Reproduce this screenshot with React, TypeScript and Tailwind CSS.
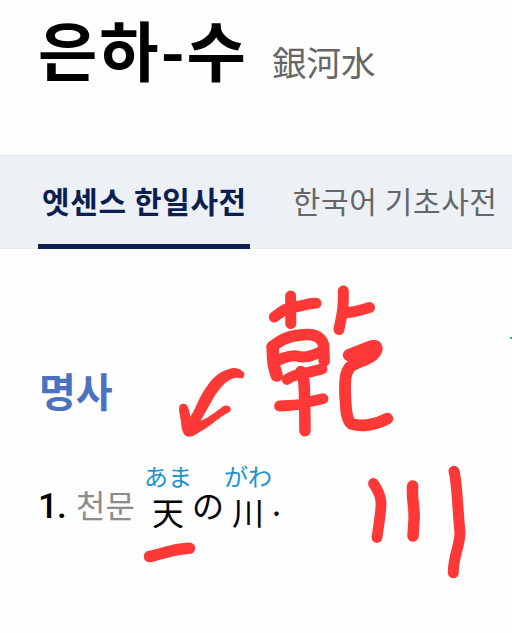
type Word = { text: string; reading?: string };

const TABS = [
    { name: "엣센스 한일사전", active: true },
    { name: "한국어 기초사전", active: false },
];

const WORDS: Word[] = [
    { text: "天", reading: "あま" },
    { text: "の" },
    { text: "川", reading: "がわ" },
];

// pen strokes, grouped by what was written
const STROKES: { d: string; width: number }[] = [
    // 乾
    { d: "M274.3 317 C280 313 284 309 290 308 C300 307 307 303 316 303.3", width: 11 },
    { d: "M290.6 296 L290.8 323.5", width: 11 },
    { d: "M343.3 291 C343.8 305 342.5 313 338.9 329.5", width: 11 },
    { d: "M346 312.7 C355 312 361 310 369.5 307.5", width: 11 },
    { d: "M272.7 347 C273 362 273.5 366 276.7 375.5", width: 12.5 },
    { d: "M272.3 346.5 C278 342 286 336 301 335 C316 333 324 338 323.8 349 L324.2 361", width: 11.5 },
    { d: "M275 361 C285 358 289 355 297 356 C306 359 312 355 323 351", width: 11 },
    { d: "M287 379.5 C294 374 302 374 310 372 L322 369", width: 10.8 },
    { d: "M301 371.5 C305 378 304.3 390 304.7 404 L305 430.8", width: 11.5 },
    { d: "M279.5 406 C293 405 300 406 308 402 L323 398.7", width: 10.8 },
    { d: "M348.7 355 L369 347 C378 344 379 349 373 355 C366 361 356 362 350 367 C345 373 345 380 345 392 C346 410 346 420 352 424 C361 427 376 425 387.3 418.7", width: 11.8 },
    // underline
    { d: "M149.5 556.5 C162 554 172 549 189.5 548.3", width: 11.5 },
    // 川
    { d: "M373.5 483.5 C384 499 381 506 379.5 520 L377 537.5", width: 10.8 },
    { d: "M412.6 486 C411.5 500 415 508 414 521 L413 536", width: 11.5 },
    { d: "M454 471.3 C457 482 457 500 460 533 C460 545 453 557 453.3 572.7", width: 11 },
];

const ARROW =
    "M231.7 368.3 C236 367.5 239 368.7 241.7 370.7 C244 371.8 244.8 373.2 244.3 375 C244 377.5 242.8 378.5 241 378.3 C238 377.4 235 377.4 231.7 379 C228 380.5 225 383 222.3 386 C219 389.5 216 393.5 213.3 398.3 L200.5 421 C209 417.5 216 411.5 222.8 406.5 C227.5 403.5 232.5 407.5 230.3 411 C229.5 412.5 227 413.3 225 414.3 C217 419.5 210 426.5 201.7 430.7 C198 432.8 194 436.3 190 436.6 C187 437 184.5 435.5 183.3 432.7 C181.5 429 181.3 426 181 421.7 C180.5 417 179 413 179 408.3 C179 405.5 181 403.6 183.3 403.7 C186 403.8 187.2 405 187.7 406.7 C189 410 190 413 190.3 416.7 C195 410 198 400 203.3 391.7 C207.5 385 212.5 378 218.3 374 C222.5 371.2 227 369.2 231.7 368.3 Z";

const Header = () => (
    <header className="flex items-baseline h-[155px] pl-[38px] pt-[16px] leading-none">
        <h1 className="text-[64.5px] tracking-[2px] font-bold text-black">은하-수</h1>
        <span className="ml-[24px] text-[34.5px] text-[#666666] font-['Noto_Sans_CJK_JP',sans-serif]">銀河水</span>
    </header>
);

const Tabs = () => (
    <nav className="flex h-[94px] pl-[38px] gap-[39px] bg-[#edf1f5] border-y border-[#e3e8eb]">
        {TABS.map(tab => (
            <button
                key={tab.name}
                className={`h-[93px] shrink-0 whitespace-nowrap pl-[4px] pr-[3px] text-[30px] tracking-[0.6px] ${tab.active ? "font-bold text-[#0c1f51] border-b-[5px] border-[#0c1f51]" : "text-[#666666] border-b-[5px] border-transparent"}`}
            >
                {tab.name}
            </button>
        ))}
    </nav>
);

const Entry = () => (
    <div className="flex items-end mt-[49px] h-[70px] pl-[38px] leading-none">
        <span className="w-[38px] mb-[5px] text-[35px] tracking-[-0.8px] font-medium text-black font-[Roboto,sans-serif]">1.</span>
        <span className="mb-[9px] text-[32px] text-[#8c8c8c]">천문</span>
        <div className="flex items-end mb-[2px] ml-[9px] text-black font-['Noto_Sans_CJK_JP',sans-serif]">
            {WORDS.map(word => (
                <div key={word.text} className={word.reading ? "flex flex-col items-center w-[48px]" : "w-[32px] mb-[7px]"}>
                    {word.reading && <span className="mb-[7px] text-[24px] text-[#1b93d1]">{word.reading}</span>}
                    <span className="block text-[32px]">{word.text}</span>
                </div>
            ))}
            <span className="mb-[9px] text-[32px]">.</span>
        </div>
    </div>
);

const Doodle = () => (
    <svg className="absolute inset-0 pointer-events-none" width="512" height="633" viewBox="0 0 512 633" fill="none" stroke="#fe3837" strokeLinecap="round" strokeLinejoin="round">
        {STROKES.map(s => (
            <path key={s.d} d={s.d} strokeWidth={s.width} />
        ))}
        <path d={ARROW} fill="#fe3837" stroke="none" />
    </svg>
);

export default function App() {
    return (
        <div className="relative w-[512px] h-[633px] overflow-hidden bg-[#fefefe] font-['Noto_Sans_CJK_KR',sans-serif]">
            <Header />
            <Tabs />
            <main>
                {/* edge of the button that sits off to the right */}
                <div className="flex justify-end h-[90px] pt-[88px]">
                    <div className="w-[2px] h-[2px] bg-[#3fa5ad]" />
                </div>
                <h2 className="mt-[31px] pl-[39px] text-[40px] leading-none font-bold text-[#4b72c0]">명사</h2>
                <Entry />
            </main>
            <Doodle />
        </div>
    );
}
